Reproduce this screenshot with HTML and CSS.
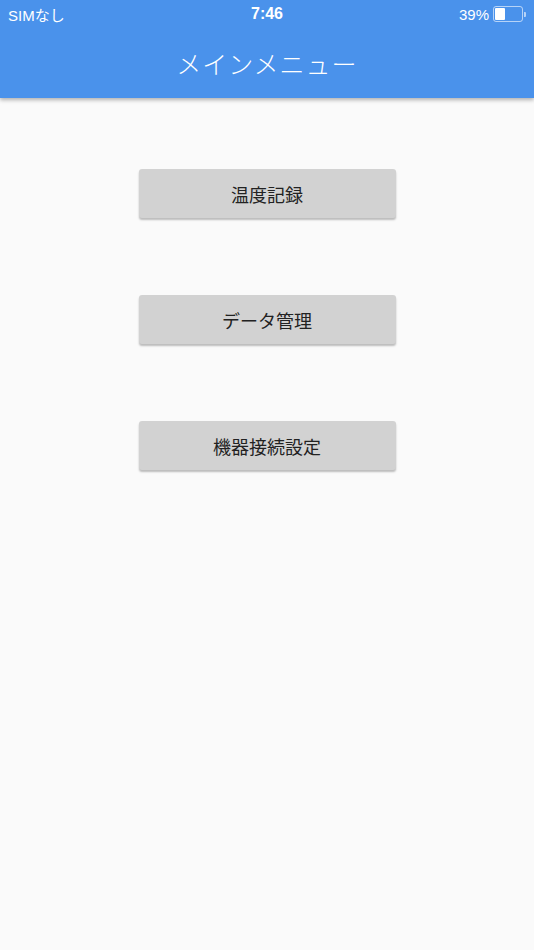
FILE: index.html
```html
<!DOCTYPE html>
<html lang="ja">
<head>
<meta charset="UTF-8" />
<meta name="viewport" content="width=device-width, initial-scale=1" />
<title>メインメニュー</title>
<link rel="stylesheet" href="styles.css">
</head>
<body>

<header class="app-bar">
  <div class="status-bar">
    <span class="carrier">SIMなし</span>
    <span class="clock">7:46</span>
    <span class="battery">
      39%
      <span class="battery-icon"><span class="battery-level"></span></span>
      <span class="battery-tip"></span>
    </span>
  </div>
  <h1 class="title">メインメニュー</h1>
</header>

<main class="menu">
  <button class="menu-btn">温度記録</button>
  <button class="menu-btn">データ管理</button>
  <button class="menu-btn">機器接続設定</button>
</main>

</body>
</html>
```

FILE: styles.css
```css
body {
  margin: 0;
  background: #fafafa;
  font-family: "Noto Sans CJK JP", "Noto Sans", sans-serif;
  min-height: 100vh;
}

.app-bar {
  background: #4a92eb;
  color: #fff;
  height: 98px;
  box-shadow: 0 2px 4px rgba(0,0,0,0.3);
  position: relative;
  z-index: 1;
}

.status-bar {
  display: grid;
  grid-template-columns: 1fr auto 1fr;
  align-items: center;
  height: 28px;
  padding: 0 8px;
  font-family: "Liberation Sans", "Noto Sans CJK JP", sans-serif;
  font-size: 15px;
}

.carrier {
  justify-self: start;
}

.clock {
  font-weight: 700;
  font-size: 16px;
}

.battery {
  justify-self: end;
  display: flex;
  align-items: center;
  gap: 4px;
}

.battery-icon {
  width: 26px;
  height: 12px;
  border: 1px solid rgba(255,255,255,0.6);
  border-radius: 3px;
  padding: 1px;
  display: flex;
}

.battery-level {
  width: 10px;
  background: #fff;
  border-radius: 1px;
}

.battery-tip {
  width: 2px;
  height: 5px;
  background: rgba(255,255,255,0.6);
  margin-left: -3px;
  border-radius: 0 1px 1px 0;
}

.title {
  margin: 0;
  text-align: center;
  font-weight: 300;
  font-size: 25px;
  line-height: 70px;
  letter-spacing: 1px;
}

.menu {
  display: flex;
  flex-direction: column;
  align-items: center;
  gap: 77px;
  padding-top: 71px;
}

.menu-btn {
  width: 257px;
  height: 49px;
  background: #d2d2d2;
  border: none;
  border-radius: 3px;
  box-shadow: 0 2px 2px rgba(0,0,0,0.25);
  font-family: "Noto Sans CJK JP", sans-serif;
  font-size: 18px;
  color: #222;
  cursor: pointer;
}
```
